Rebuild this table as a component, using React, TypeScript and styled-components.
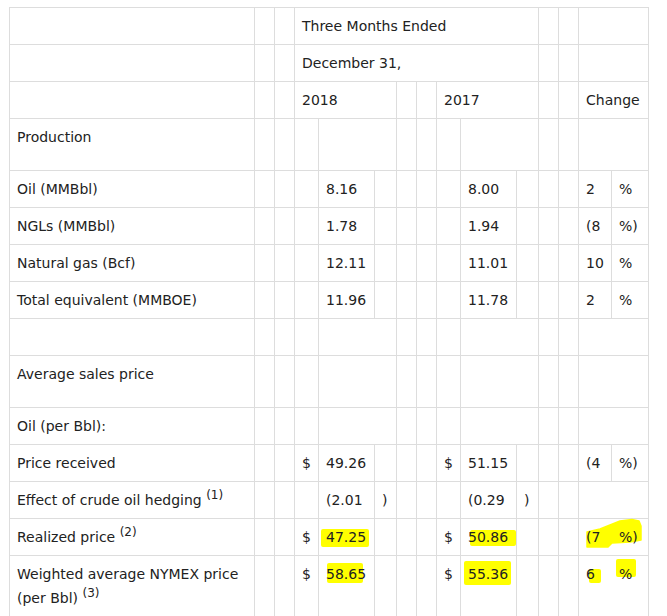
import type { ReactNode } from 'react'
import styled, { createGlobalStyle } from 'styled-components'

const GlobalStyle = createGlobalStyle`
  body {
    margin: 0;
    background: #fff;
    color: #222;
    font-family: "DejaVu Sans", Verdana, sans-serif;
  }
`

// column widths measured line to line
const COLS = [245, 20, 20, 24, 56, 22, 20, 20, 24, 56, 22, 20, 20, 33, 37]

type Inset = { t: number; r: number; b: number; l: number }

function Hl({ children, at }: { children: ReactNode; at: Inset }) {
  return (
    <Mark $t={at.t} $r={at.r} $b={at.b} $l={at.l}>
      {children}
    </Mark>
  )
}

function HeaderRow({ children }: { children?: ReactNode }) {
  return (
    <Row>
      <Cell />
      <Cell />
      <Cell />
      <Cell colSpan={8}>{children}</Cell>
      <Cell />
      <Cell />
      <Cell colSpan={2} />
    </Row>
  )
}

function SectionRow({ label = '\u00a0', tall }: { label?: ReactNode; tall?: boolean }) {
  return (
    <Row $tall={tall}>
      <Cell>{label}</Cell>
      <Cell />
      <Cell />
      <Cell />
      <Cell colSpan={2} />
      <Cell />
      <Cell />
      <Cell />
      <Cell colSpan={2} />
      <Cell />
      <Cell />
      <Cell colSpan={2} />
    </Row>
  )
}

type DataRowProps = {
  label: ReactNode
  dollar?: boolean
  a: ReactNode
  b: ReactNode
  close?: boolean
  num?: ReactNode
  pct?: ReactNode
  merged?: ReactNode
}

function DataRow({ label, dollar, a, b, close, num, pct, merged }: DataRowProps) {
  return (
    <Row>
      <Cell>{label}</Cell>
      <Cell />
      <Cell />
      <Cell>{dollar && '$'}</Cell>
      <Cell>{a}</Cell>
      <Cell>{close && ')'}</Cell>
      <Cell />
      <Cell />
      <Cell>{dollar && '$'}</Cell>
      <Cell>{b}</Cell>
      <Cell>{close && ')'}</Cell>
      <Cell />
      <Cell />
      {merged !== undefined ? (
        <Cell colSpan={2}>{merged}</Cell>
      ) : (
        <>
          <Cell>{num}</Cell>
          <Cell>{pct}</Cell>
        </>
      )}
    </Row>
  )
}

function App() {
  return (
    <>
      <GlobalStyle />
      <Page>
        <Table>
          <colgroup>
            {COLS.map((w, i) => (
              <Col key={i} $w={w} />
            ))}
          </colgroup>
          <tbody>
            <HeaderRow>Three Months Ended</HeaderRow>
            <HeaderRow>December 31,</HeaderRow>
            <Row>
              <Cell />
              <Cell />
              <Cell />
              <Cell colSpan={3}>2018</Cell>
              <Cell />
              <Cell />
              <Cell colSpan={3}>2017</Cell>
              <Cell />
              <Cell />
              <Cell colSpan={2}>Change</Cell>
            </Row>
            <SectionRow label="Production" tall />
            <DataRow label="Oil (MMBbl)" a="8.16" b="8.00" num="2" pct="%" />
            <DataRow label="NGLs (MMBbl)" a="1.78" b="1.94" num="(8" pct="%)" />
            <DataRow label="Natural gas (Bcf)" a="12.11" b="11.01" num="10" pct="%" />
            <DataRow label="Total equivalent (MMBOE)" a="11.96" b="11.78" num="2" pct="%" />
            <SectionRow />
            <SectionRow label="Average sales price" tall />
            <SectionRow label="Oil (per Bbl):" />
            <DataRow label="Price received" dollar a="49.26" b="51.15" num="(4" pct="%)" />
            <DataRow
              label={
                <>
                  Effect of crude oil hedging <Sup>(1)</Sup>
                </>
              }
              a="(2.01"
              b="(0.29"
              close
              merged={null}
            />
            <DataRow
              label={
                <>
                  Realized price <Sup>(2)</Sup>
                </>
              }
              dollar
              a={<Hl at={{ t: 0, r: -3, b: -2, l: -5 }}>47.25</Hl>}
              b={<Hl at={{ t: 1, r: -8, b: -1, l: 2 }}>50.86</Hl>}
              merged={
                <ChangePair>
                  <Swoosh viewBox="0 0 60 34">
                    <polygon
                      points="1,15 14,12 24,8 34,4 46,2.5 53,4 55,9 55,23 44,25 26,26 22,30 1,30"
                      fill="#ffff00"
                      strokeLinejoin="round"
                      stroke="#ffff00"
                      strokeWidth="1.5"
                    />
                  </Swoosh>
                  <ChangeNum>(7</ChangeNum>
                  %)
                </ChangePair>
              }
            />
            <DataRow
              label={
                <>
                  Weighted average NYMEX price (per Bbl) <Sup>(3)</Sup>
                </>
              }
              dollar
              a={<Hl at={{ t: -3, r: 3, b: -1, l: 1 }}>58.65</Hl>}
              b={<Hl at={{ t: -5, r: -3, b: -3, l: -4 }}>55.36</Hl>}
              merged={
                <>
                  <ChangeNum>
                    <Hl at={{ t: 2.5, r: -6, b: -1, l: 3 }}>6</Hl>
                  </ChangeNum>
                  <Hl at={{ t: -7.5, r: -4, b: 5.5, l: -3 }}>%</Hl>
                </>
              }
            />
          </tbody>
        </Table>
      </Page>
    </>
  )
}

const Page = styled.div`
  padding: 7px 0 0 9px;
`

const Table = styled.table`
  border-collapse: collapse;
  table-layout: fixed;
  width: 640px;
  font-size: 14px;
`

const Col = styled.col<{ $w: number }>`
  width: ${p => p.$w}px;
`

const Row = styled.tr<{ $tall?: boolean }>`
  & > td {
    padding-bottom: ${p => (p.$tall ? 21 : 6)}px;
  }
`

const Cell = styled.td`
  border: 1px solid #ddd;
  padding: 6px 7px;
  line-height: 24px;
  vertical-align: top;
  text-align: left;
`

const Sup = styled.sup`
  font-size: 12px;
  line-height: 0;
`

const Mark = styled.span<{ $t: number; $r: number; $b: number; $l: number }>`
  position: relative;
  z-index: 0;

  &::before {
    content: '';
    position: absolute;
    top: ${p => p.$t}px;
    right: ${p => p.$r}px;
    bottom: ${p => p.$b}px;
    left: ${p => p.$l}px;
    background: #ffff00;
    border-radius: 2px;
    z-index: -1;
  }
`

const ChangePair = styled.span`
  position: relative;
  z-index: 0;
  display: inline-block;
`

const ChangeNum = styled.span`
  display: inline-block;
  width: 33px;
`

const Swoosh = styled.svg`
  position: absolute;
  left: 0;
  top: -8px;
  width: 60px;
  height: 34px;
  overflow: visible;
  z-index: -1;
`

export default App
